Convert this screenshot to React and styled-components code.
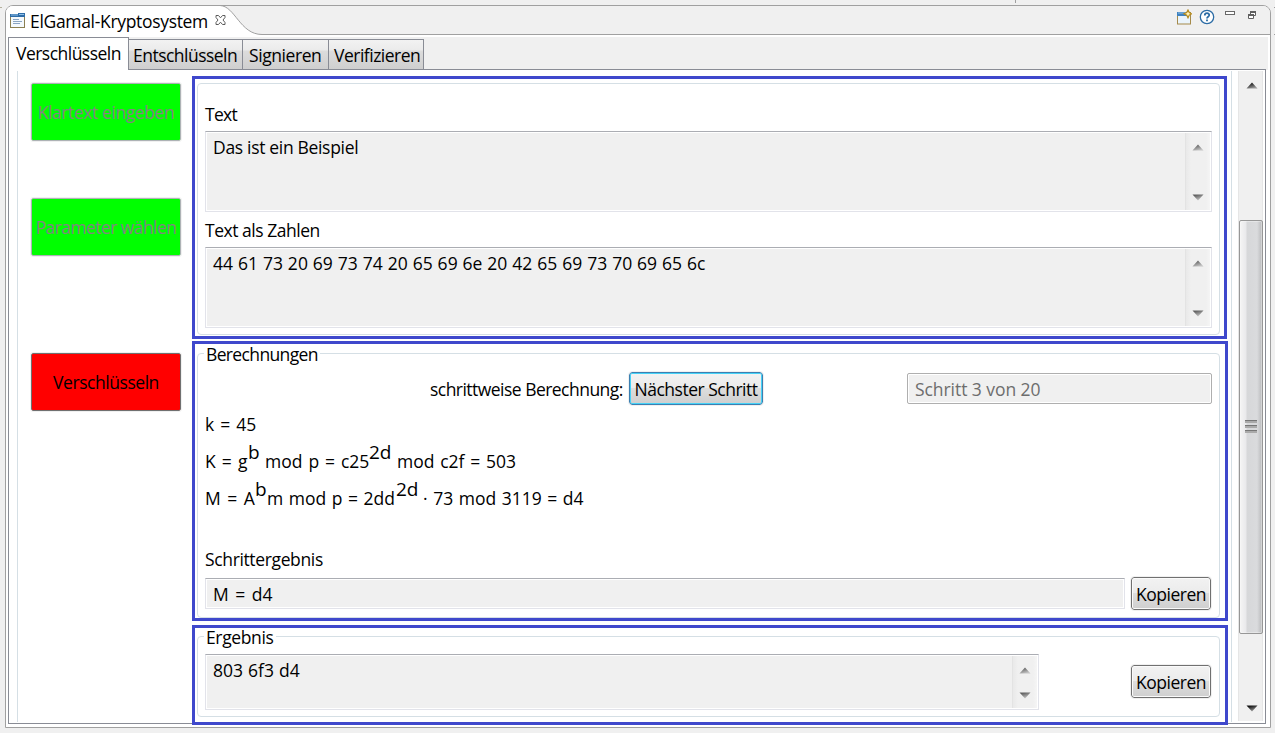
import React from 'react';
import styled, { createGlobalStyle, css } from 'styled-components';

const GlobalStyle = createGlobalStyle`
  * { box-sizing: border-box; }
  html, body { margin: 0; padding: 0; }
  body {
    background: #f0f0f0;
    color: #000;
    font-family: 'Open Sans', 'Noto Sans', sans-serif;
    font-size: 17.5px;
    line-height: 24px;
    overflow: hidden;
  }
  button { font: inherit; }
`;

const spacing = css`
  white-space: pre;
  letter-spacing: ${(p) => p.$track || 0}px;
  word-spacing: ${(p) => p.$word || 0}px;
`;

const Desktop = styled.div`
  width: 1275px;
  height: 733px;
  padding: 5px 4px 5px 5px;
  background:
    linear-gradient(#b4b09c, #b4b09c) 0 7px / 2px 1px no-repeat,
    linear-gradient(#a0a0a0, #a0a0a0) 1274px 7px / 1px 1px no-repeat,
    linear-gradient(#a0a0a0, #a0a0a0) 1274px 34px / 1px 1px no-repeat,
    linear-gradient(#a0a0a0, #a0a0a0) 1015px 0 / 1px 3px no-repeat,
    #f0f0f0;
`;

const ViewFrame = styled.section`
  width: 1266px;
  height: 723px;
  display: flex;
  flex-direction: column;
  background: #fff;
  border: 1px solid #a0a0a0;
  border-radius: 8px 8px 0 0;
  overflow: hidden;
`;

const TitleBar = styled.header`
  display: flex;
  height: 29px;
  flex: none;
  background: #f0f0f0;
  border-bottom: 1px solid #a0a0a0;
`;

const TitleTab = styled.div`
  position: relative;
  z-index: 1;
  display: flex;
  flex: none;
  width: 214px;
  height: 29px;
  padding: 3px 0 0 4px;
  background: #fff;
`;

const TitleText = styled.span`
  flex: none;
  width: 178px;
  margin-left: 4px;
  ${spacing}
`;

const TitleTools = styled.div`
  display: flex;
  margin-left: auto;
  padding: 0 13px 0 0;
`;

const Icon = styled.svg`
  display: block;
  flex: none;
  margin: ${(p) => p.$m || 0};
`;

const Folder = styled.div`
  display: flex;
  flex-direction: column;
  flex: 1;
  margin: 2px 2px 3px 2px;
`;

const TabStrip = styled.nav`
  display: flex;
  align-items: flex-end;
  height: 33px;
  background: #f0f0f0;
`;

const Tab = styled.div`
  flex: none;
  width: ${(p) => p.$w}px;
  height: 31px;
  padding: ${(p) => p.$pad || '3px 0 0 4px'};
  ${spacing}
  border: 1px solid #898c95;
  border-left-width: 0;
  background: linear-gradient(#f2f2f2 0, #ebebeb 10px, #dcdcdc 11px, #cfcfcf 100%);
  ${(p) => p.$active && css`
    position: relative;
    height: 33px;
    padding: 3px 0 0 7px;
    border-left-width: 1px;
    border-bottom: 0;
    background: #fff;
  `}
`;

const FolderBody = styled.div`
  display: flex;
  width: 1258px;
  height: 655px;
  margin-top: -1px;
  padding: 1px 2px 0 8px;
  border: 1px solid #898c95;
`;

const Page = styled.div`
  display: flex;
  width: 1216px;
  height: 651px;
  border: solid #d5dfe5;
  border-width: 0 1px;
`;

const Steps = styled.aside`
  flex: none;
  width: 174px;
  padding: 12px 0 0 13px;
`;

const StepButton = styled.button`
  display: block;
  width: 150px;
  height: 58px;
  margin-bottom: ${(p) => p.$after || 0}px;
  padding: 0;
  ${spacing}
  border: 1px solid ${(p) => (p.$current ? '#707070' : '#adb2b5')};
  border-radius: 2px;
  outline: 1px solid #f0f0f0;
  background: ${(p) => (p.$current ? '#ff0000' : '#00ff00')};
  color: ${(p) => (p.$current ? '#000' : '#838383')};
`;

const Marks = styled.main`
  flex: none;
  padding-top: 5px;
`;

const Mark = styled.div`
  width: ${(p) => p.$w || 1036}px;
  height: ${(p) => p.$h}px;
  margin-bottom: ${(p) => p.$after || 0}px;
  padding: ${(p) => p.$pad};
  border: 3px solid #3f48cc;
  background: #fff;
`;

const Group = styled.fieldset`
  width: 1023px;
  height: ${(p) => p.$h}px;
  min-width: 0;
  margin: 0;
  padding: ${(p) => p.$pad || '0'};
  border: 1px solid #d5dfe5;
  border-radius: 4px;
`;

const Legend = styled.div`
  width: ${(p) => p.$w}px;
  height: 18px;
  line-height: 18px;
  margin: -11px 0 0 -1px;
  padding-left: 2px;
  background: #fff;
  ${spacing}
`;

const Line = styled.div`
  display: flex;
  height: 24px;
  margin: ${(p) => p.$mt || 0}px 0 0 ${(p) => p.$ml || 0}px;
  ${spacing}
`;

const Seg = styled.span`
  flex: none;
  width: ${(p) => p.$w}px;
  ${spacing}
`;

const Power = styled(Seg)`
  font-size: 19px;
  margin-top: -9px;
`;

const Area = styled.div`
  display: flex;
  justify-content: space-between;
  flex: none;
  width: ${(p) => p.$w || 1007}px;
  height: ${(p) => p.$h || 81}px;
  margin-top: ${(p) => p.$mt || 0}px;
  padding-left: 7px;
  border: 1px solid #e2e3ea;
  border-top-color: #abadb3;
  box-shadow: inset 0 0 0 1px #fff;
  background: #f0f0f0;
`;

const AreaText = styled.span`
  padding-top: 3px;
  ${spacing}
`;

const SmallTrack = styled.div`
  display: flex;
  flex-direction: column;
  justify-content: space-between;
  align-items: center;
  width: 25px;
  margin: 1px;
  padding: ${(p) => p.$pad || '11px 0 9px'};
  border-left: 1px solid #e3e3e3;
  background: linear-gradient(90deg, #e9e9e9, #f0f0f0 5px, #f0f0f0 20px, #f5f5f5);
`;

const Row = styled.div`
  display: flex;
  align-items: flex-start;
  margin-top: ${(p) => p.$mt || 0}px;
`;

const PushButton = styled.button`
  flex: none;
  width: ${(p) => p.$w || 80}px;
  height: 33px;
  margin: ${(p) => p.$m || 0};
  padding: 1px 0 0;
  ${spacing}
  color: #000;
  border: 1px solid ${(p) => (p.$focused ? '#3c7fb1' : '#707070')};
  border-radius: 3px;
  outline: 1px solid #f0f0f0;
  box-shadow: inset 0 0 0 1px ${(p) => (p.$focused ? '#46d2f7' : '#fafafa')};
  background: linear-gradient(#f2f2f2, #ebebeb 49%, #dddddd 50%, #cfcfcf);
`;

const StatusField = styled.div`
  width: 305px;
  height: 31px;
  margin: 1px 0 0 144px;
  padding: 3px 0 0 7px;
  border: 1px solid #afafaf;
  border-radius: 2px;
  box-shadow: inset 0 0 0 1px #fff;
  background: #f0f0f0;
  color: #6d6d6d;
  ${spacing}
`;

const ScrollBar = styled.div`
  display: flex;
  flex-direction: column;
  align-items: center;
  width: 25px;
  height: 650px;
  margin-left: 6px;
  padding-top: 11px;
  border: solid #e6e6e6;
  border-width: 0 1px 0 1px;
  background: #f0f0f0;
`;

const Thumb = styled.div`
  display: flex;
  align-items: center;
  justify-content: center;
  width: 24px;
  height: 414px;
  margin: 131px 0 71px;
  border: 1px solid #979797;
  border-radius: 2px;
  box-shadow: inset 0 0 0 1px #fafafa66;
  background: linear-gradient(90deg, #f5f5f5 0, #e9e9eb 6px, #d6d7d9 7px, #dadbdd 17px, #b9babc 100%);
`;

function Arrow({ down, dark }) {
  const top = dark ? '#111' : '#606060';
  const low = dark ? '#999' : '#c4c4c4';
  const id = `arrow-${down ? 'down' : 'up'}-${dark ? 'dark' : 'light'}`;
  return (
    <Icon width="12" height="7" viewBox="0 0 12 7" $m={dark ? '0 0 0 2px' : '0'}>
      <defs>
        <linearGradient id={id} x1="0" y1="0" x2="0.5" y2="1">
          <stop offset="0.2" stopColor={top} />
          <stop offset="1" stopColor={low} />
        </linearGradient>
      </defs>
      <path d={down ? 'M.5 .5h11L6 6.5z' : 'M.5 6.5h11L6 .5z'} fill={`url(#${id})`} />
    </Icon>
  );
}

function Scroller({ pad }) {
  return (
    <SmallTrack $pad={pad}>
      <Arrow />
      <Arrow down />
    </SmallTrack>
  );
}

function ViewIcon() {
  return (
    <Icon width="16" height="16" viewBox="0 0 16 16" $m="4px 0 0 0">
      <rect x="0.5" y="1.5" width="14" height="13" fill="#f4f9fd" stroke="#8b7f52" />
      <path d="M0 1h8v-1h7v4h-15z" fill="#2f6da8" />
      <path d="M1 2h7M9 1.500h5" stroke="#8fc0e8" />
      <path d="M3 6.500h6M3 8.500h9M3 10.500h7" stroke="#8aa5c4" />
    </Icon>
  );
}

function CloseIcon() {
  return (
    <Icon width="11" height="11" viewBox="0 0 11 11" $m="6px 0 0 7px">
      <path
        d="M1 .5H3.500L5.500 2.800 7.500 .5H10V2.500L8 5 10 7.500V9.500H7.500L5.500 7.200 3.500 9.500H1V7.500L3 5 1 2.500Z"
        fill="#fff"
        stroke="#5c5c5c"
      />
    </Icon>
  );
}

export default function App() {
  return (
    <>
      <GlobalStyle />
      <Desktop>
        <ViewFrame>
          <TitleBar>
            <TitleTab>
              <ViewIcon />
              <TitleText $track={-0.32}>ElGamal-Kryptosystem</TitleText>
              <CloseIcon />
            </TitleTab>
            <Icon width="42" height="29" viewBox="0 0 42 29">
              <path d="M0 0C15 0 20 28.500 42 28.500V29H0z" fill="#fff" />
              <path d="M0 -.5C15 0 20 28.500 42 28.500" fill="none" stroke="#a0a0a0" />
            </Icon>
            <TitleTools>
              <Icon width="16" height="16" viewBox="0 0 16 16" $m="3px 0 0">
                <rect x="1.500" y="3.500" width="13" height="11.500" fill="#eaf4fc" stroke="#a58a4a" />
                <path d="M1 3h11v4h-11z" fill="#3f82c0" />
                <path d="M2 4h8" stroke="#8fc0e8" />
                <path d="M12 1l1.300 2.500 2.200 1.300-2.200 1.300-1.300 2.700-1.300-2.700-2.700-1.300 2.700-1.300z" fill="#fff3b8" stroke="#b58a1c" strokeWidth="1.200" />
              </Icon>
              <Icon width="16" height="16" viewBox="0 0 16 16" $m="3px 0 0 7px">
                <circle cx="8" cy="8" r="6.700" fill="#fff" stroke="#2c6ca5" strokeWidth="1.300" />
                <path d="M5.800 6.400c0-3 4.600-2.800 4.400-.2-.1 1.500-2.200 1.600-2.200 3.200M8 10.600v1.700" fill="none" stroke="#2c6ca5" strokeWidth="1.800" />
              </Icon>
              <Icon width="11" height="5" viewBox="0 0 11 5" $m="5px 0 0 10px">
                <rect x="0.5" y="0.5" width="9" height="3" fill="#fff" stroke="#696969" />
              </Icon>
              <Icon width="9" height="9" viewBox="0 0 9 9" $m="5px 0 0 12px">
                <path d="M2.500 .5h5v4h-5z" fill="#fff" stroke="#606060" />
                <path d="M2 1h6" stroke="#606060" strokeWidth="2" />
                <path d="M.5 3.500h5v4h-5z" fill="#fff" stroke="#606060" />
                <path d="M0 4h6" stroke="#606060" strokeWidth="2" />
              </Icon>
            </TitleTools>
          </TitleBar>
          <Folder>
            <TabStrip>
              <Tab $active $w={121} $track={-0.52}>Verschlüsseln</Tab>
              <Tab $w={114} $track={-0.52}>Entschlüsseln</Tab>
              <Tab $w={86} $track={-0.42} $pad="3px 0 0 6px">Signieren</Tab>
              <Tab $w={95} $track={-0.5} $pad="3px 0 0 5px">Verifizieren</Tab>
            </TabStrip>
            <FolderBody>
              <Page>
                <Steps>
                  <StepButton disabled $after={57} $track={-0.42}>Klartext eingeben</StepButton>
                  <StepButton disabled $after={97} $track={-0.58}>Parameter wählen</StepButton>
                  <StepButton $current $track={-0.45}>Verschlüsseln</StepButton>
                </Steps>
                <Marks>
                  <Mark $w={1035} $h={263} $after={2} $pad="4px 0 0 2px">
                    <Group $h={252} $pad="18px 0 0 7px">
                      <Line $track={-0.7}>Text</Line>
                      <Area $mt={5}>
                        <AreaText $track={-0.32}>Das ist ein Beispiel</AreaText>
                        <Scroller />
                      </Area>
                      <Line $mt={6} $track={-0.47}>Text als Zahlen</Line>
                      <Area $mt={5}>
                        <AreaText $word={0.4}>44 61 73 20 69 73 74 20 65 69 6e 20 42 65 69 73 70 69 65 6c</AreaText>
                        <Scroller />
                      </Area>
                    </Group>
                  </Mark>
                  <Mark $h={280} $after={4} $pad="9px 0 0 2px">
                    <Group $h={265} $pad="2px 0 0 7px">
                      <Legend $w={116} $track={-0.64}>Berechnungen</Legend>
                      <Row $mt={9}>
                        <Line $mt={5} $ml={225}><Seg $w={199} $track={-0.53}>schrittweise Berechnung:</Seg></Line>
                        <PushButton $focused $w={134} $track={-0.5}>Nächster Schritt</PushButton>
                        <StatusField $track={-0.06}>Schritt 3 von 20</StatusField>
                      </Row>
                      <Line $mt={7} $word={1.5}>k = 45</Line>
                      <Line $mt={13}>
                        <Seg $w={43} $word={1.6}>K = g</Seg>
                        <Power $w={17}>b</Power>
                        <Seg $w={104} $word={1.4}>mod p = c25</Seg>
                        <Power $w={28}>2d</Power>
                        <Seg $w={120} $word={1.2}>mod c2f = 503</Seg>
                      </Line>
                      <Line $mt={13}>
                        <Seg $w={50} $word={2}>M = A</Seg>
                        <Power $w={12}>b</Power>
                        <Seg $w={129} $word={1}>m mod p = 2dd</Seg>
                        <Power $w={27}>2d</Power>
                        <Seg $w={162} $word={1}>· 73 mod 3119 = d4</Seg>
                      </Line>
                      <Line $mt={37} $track={-0.36}>Schrittergebnis</Line>
                      <Row $mt={6}>
                        <Area $mt={1} $w={920} $h={31}><AreaText $word={2}>M = d4</AreaText></Area>
                        <PushButton $m="0 0 0 6px" $track={-0.5}>Kopieren</PushButton>
                      </Row>
                    </Group>
                  </Mark>
                  <Mark $h={100} $pad="8px 0 0 2px">
                    <Group $h={81} $pad="2px 0 0 7px">
                      <Legend $w={72} $track={-0.36}>Ergebnis</Legend>
                      <Row $mt={8}>
                        <Area $w={834} $h={56}>
                          <AreaText $word={0.5}>803 6f3 d4</AreaText>
                          <Scroller pad="11px 0 9px" />
                        </Area>
                        <PushButton $m="11px 0 0 92px" $track={-0.5}>Kopieren</PushButton>
                      </Row>
                    </Group>
                  </Mark>
                </Marks>
              </Page>
              <ScrollBar>
                <Arrow dark />
                <Thumb>
                  <Icon width="12" height="15" viewBox="0 0 12 15" $m="0 0 1px">
                    <path d="M0 1.500h12M0 6.500h12M0 11.500h12" stroke="#777" />
                    <path d="M0 3h12M0 8h12M0 13h12" stroke="#aaa" strokeWidth="2" />
                  </Icon>
                </Thumb>
                <Arrow down dark />
              </ScrollBar>
            </FolderBody>
          </Folder>
        </ViewFrame>
      </Desktop>
    </>
  );
}
